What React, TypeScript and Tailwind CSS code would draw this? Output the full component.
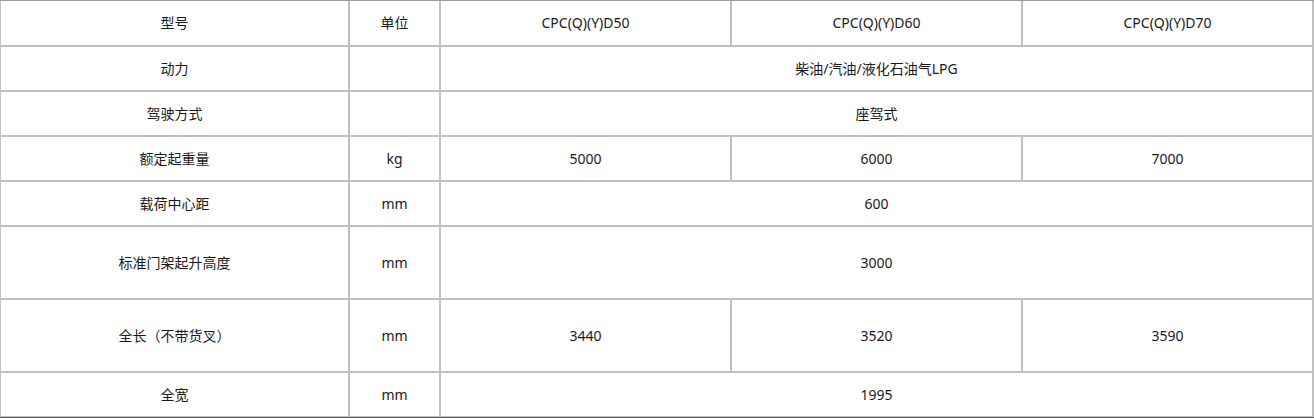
import React from "react";

type Cell = { text: string; span?: number };
type Row = { h: string; cells: Cell[]; last?: boolean };

const rows: Row[] = [
  { h: "h-[46px]", cells: [{ text: "型号" }, { text: "单位" }, { text: "CPC(Q)(Y)D50" }, { text: "CPC(Q)(Y)D60" }, { text: "CPC(Q)(Y)D70" }] },
  { h: "h-[45px]", cells: [{ text: "动力" }, { text: "" }, { text: "柴油/汽油/液化石油气LPG", span: 3 }] },
  { h: "h-[45px]", cells: [{ text: "驾驶方式" }, { text: "" }, { text: "座驾式", span: 3 }] },
  { h: "h-[45px]", cells: [{ text: "额定起重量" }, { text: "kg" }, { text: "5000" }, { text: "6000" }, { text: "7000" }] },
  { h: "h-[45px]", cells: [{ text: "载荷中心距" }, { text: "mm" }, { text: "600", span: 3 }] },
  { h: "h-[73px]", cells: [{ text: "标准门架起升高度" }, { text: "mm" }, { text: "3000", span: 3 }] },
  { h: "h-[73px]", cells: [{ text: "全长（不带货叉）" }, { text: "mm" }, { text: "3440" }, { text: "3520" }, { text: "3590" }] },
  { h: "h-[44px]", cells: [{ text: "全宽" }, { text: "mm" }, { text: "1995", span: 3 }], last: true },
];

function widthClass(i: number, span?: number) {
  if (i === 0) return "w-[349px]";
  if (i === 1) return "w-[91px]";
  if (span === 3) return "w-[873px]";
  return "w-[291px]";
}

export default function App() {
  return (
    <div
      className="w-[1314px] bg-white border-t border-b border-t-[#9a9a9a] border-b-[#5a5a5a] text-[14px] text-[#1a1a1a]"
      style={{ fontFamily: '"Noto Sans", "Noto Sans CJK SC", sans-serif' }}
    >
      {rows.map((r, ri) => (
        <div
          key={ri}
          className={`flex ${r.h} border-l border-l-[#c0c0c0] ${r.last ? "border-b" : "border-b-2"} border-b-[#c0c0c0]`}
        >
          {r.cells.map((c, ci) => (
            <div
              key={ci}
              className={`${widthClass(ci, c.span)} shrink-0 flex items-center justify-center border-r-2 border-r-[#c0c0c0] leading-none`}
            >
              {c.text}
            </div>
          ))}
        </div>
      ))}
    </div>
  );
}
